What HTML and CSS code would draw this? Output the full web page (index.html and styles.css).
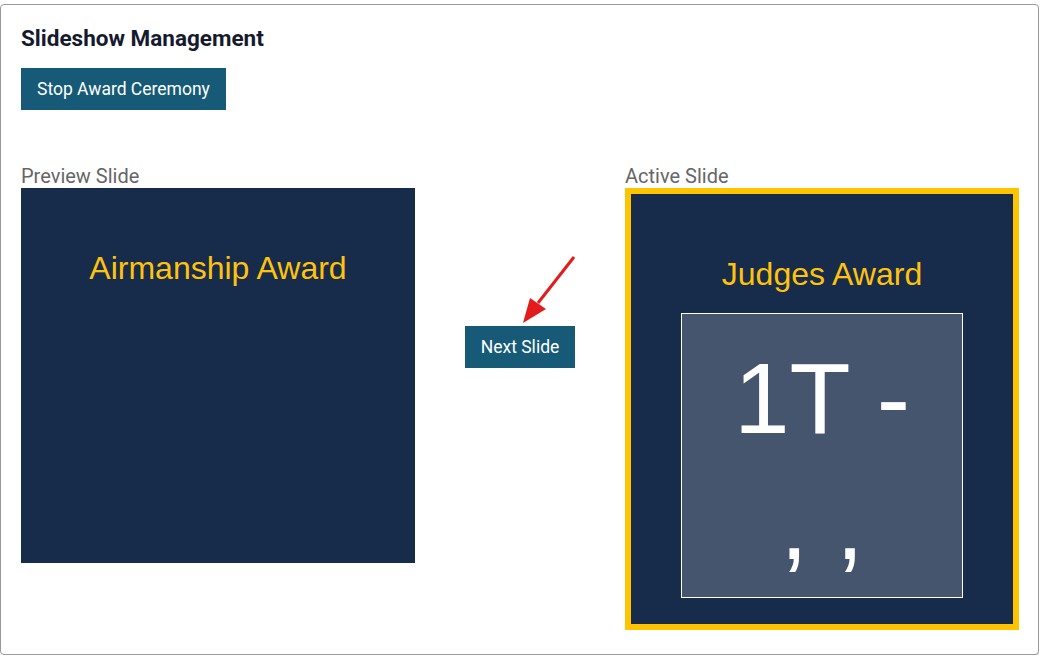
FILE: index.html
```html
<!DOCTYPE html>
<html lang="en">
<head>
	<meta charset="UTF-8">
	<meta name="viewport" content="width=device-width, initial-scale=1.0">
	<title>Slideshow Management</title>
	<link rel="stylesheet" href="styles.css">
</head>
<body>
	<div class="card">
		<h2 class="card-title">Slideshow Management</h2>
		<button class="button">Stop Award Ceremony</button>

		<div class="slides-row">
			<div class="slide-col">
				<div class="slide-label">Preview Slide</div>
				<div class="slide">
					<h3 class="slide-title">Airmanship Award</h3>
				</div>
			</div>

			<div class="middle-col">
				<button class="button next-button">Next Slide</button>
				<svg class="arrow" width="60" height="70" viewBox="0 0 60 70">
					<line x1="56" y1="2" x2="20" y2="48" stroke="#e31b1b" stroke-width="3" />
					<polygon points="5,68 12,43 28,54" fill="#e31b1b" />
				</svg>
			</div>

			<div class="slide-col">
				<div class="slide-label">Active Slide</div>
				<div class="slide active">
					<h3 class="slide-title">Judges Award</h3>
					<div class="winner-box">1T -<br>, ,</div>
				</div>
			</div>
		</div>
	</div>
</body>
</html>
```

FILE: styles.css
```css
body {
	margin: 4px 12px 0 0;
	background-color: #ffffff;
	font-family: 'Roboto', sans-serif;
}
.card {
	height: 651px;
	box-sizing: border-box;
	padding: 20px 19px 20px 20px;
	border: 1px solid #9a9a9a;
	border-radius: 4px;
	background-color: #ffffff;
	box-shadow: 4px 4px 10px rgba(30, 50, 90, 0.22);
}
.card-title {
	margin: 0 0 17px 0;
	font-size: 22.5px;
	font-weight: bold;
	color: #161a2e;
	line-height: 26px;
}
.button {
	height: 42px;
	padding: 0 16px;
	border: none;
	background-color: #165a78;
	color: #ffffff;
	font-family: 'Roboto', sans-serif;
	font-size: 17.5px;
	cursor: pointer;
}
.slides-row {
	display: grid;
	grid-template-columns: 394px 1fr 394px;
	margin-top: 55px;
}
.slide-label {
	font-size: 20px;
	color: #666666;
	line-height: 23px;
}
.slide {
	height: 375px;
	background-color: #172b4a;
	text-align: center;
	font-family: 'Liberation Sans', Arial, sans-serif;
	overflow: hidden;
}
.slide.active {
	height: auto;
	border: 6px solid #ffc400;
	padding-bottom: 26px;
}
.slide-title {
	margin: 62px 0 0 0;
	font-size: 32px;
	font-weight: normal;
	color: #ffc20e;
	line-height: 37px;
}
.slide.active .slide-title {
	margin-bottom: 20px;
}
.middle-col {
	position: relative;
	display: flex;
	justify-content: center;
	padding-top: 161px;
}
.next-button {
	width: 110px;
	padding: 0;
}
.arrow {
	position: absolute;
	left: 103px;
	top: 90px;
}
.winner-box {
	margin: 0 50px;
	padding: 21px 0 10px 0;
	border: 1px solid #ffffff;
	background-color: #45556e;
	color: #ffffff;
	font-size: 100px;
	line-height: 126px;
}
```
